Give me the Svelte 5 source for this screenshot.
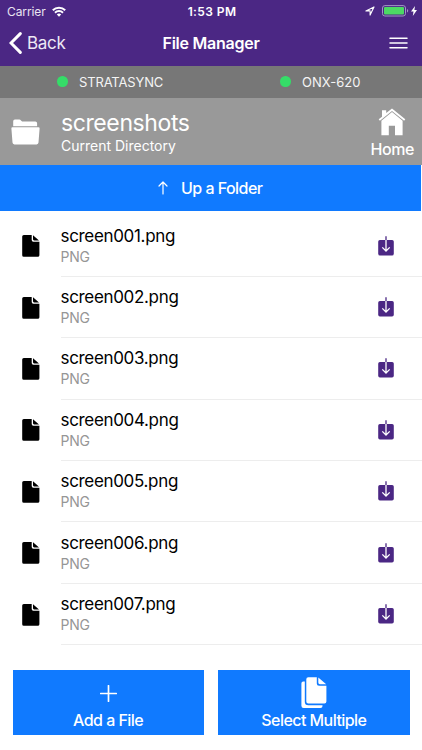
<script>
  let directory = 'screenshots';

  const connections = [
    { name: 'STRATASYNC', online: true },
    { name: 'ONX-620', online: true }
  ];

  const files = [1, 2, 3, 4, 5, 6, 7].map(n => ({
    name: `screen00${n}.png`,
    type: 'PNG'
  }));
</script>

<main class="screen">
  <header class="header">
    <div class="status-bar">
      <div class="carrier">
        <span class="carrier-name">Carrier</span>
        <svg class="wifi" viewBox="0 0 14 11"><g fill="none" stroke="currentColor" stroke-width="2"><path d="M.8 4.2a8.8 8.8 0 0 1 12.4 0"/><path d="M3 6.7a5.7 5.7 0 0 1 8 0"/></g><path d="M7 10.7 4.8 8.5a3.2 3.2 0 0 1 4.4 0z" fill="currentColor"/></svg>
      </div>
      <span class="clock">1:53 PM</span>
      <div class="power">
        <svg class="location" viewBox="0 0 10 10"><path d="M9 .9.9 4.9h4.2v4.2z" fill="none" stroke="currentColor" stroke-width="1.1" stroke-linejoin="round"/></svg>
        <svg class="battery" viewBox="0 0 27 12"><rect x=".5" y=".6" width="23" height="10.4" rx="2.4" fill="none" stroke="#a397c4"/><rect x="2" y="2" width="20" height="7.6" rx="1" fill="#4cd964"/><path d="M25 4v3.6q1.2-.5 1.2-1.8T25 4z" fill="#a397c4"/></svg>
        <svg class="bolt" viewBox="0 0 6 10"><path d="M4 0 0 5.6h2.5L1.8 10 6 4.1H3.4z" fill="currentColor"/></svg>
      </div>
    </div>
    <nav class="nav">
      <button class="back">
        <svg viewBox="0 0 13 22"><path d="M11.3 1.6 2 11l9.3 9.4" fill="none" stroke="currentColor" stroke-width="3" stroke-linecap="round"/></svg>
        <span>Back</span>
      </button>
      <h1>File Manager</h1>
      <button class="menu" aria-label="Menu">
        <svg viewBox="0 0 19 12"><path d="M1 1.2h17M1 6h17M1 10.7h17" fill="none" stroke="currentColor" stroke-width="1.5" stroke-linecap="round"/></svg>
      </button>
    </nav>
  </header>

  <div class="connections">
    {#each connections as connection}
      <div class="connection">
        <span class="dot" class:online={connection.online}></span>
        <span>{connection.name}</span>
      </div>
    {/each}
  </div>

  <section class="directory">
    <svg class="folder" viewBox="0 0 29 26"><path d="M2.2 7.2V2.3Q2.2.6 3.9.6h4.4q1 0 1.7.8l.5.6q.5.5 1.4.5h12.4q1.8 0 1.8 1.7v3zM1.5 8.2h26q1.2 0 1.1 1.2l-1.1 14.2q-.1 1.8-1.9 1.8H3.4q-1.8 0-1.9-1.8L.4 9.4q-.1-1.2 1.1-1.2z" fill="currentColor"/></svg>
    <div class="directory-text">
      <h2>{directory}</h2>
      <p>Current Directory</p>
    </div>
    <button class="home">
      <svg viewBox="0 0 28 28"><path d="M4 8.7V2.2h4.2v2.7L14 .5l13.3 10.8-1.2 1.5L14 3 1.9 12.8.7 11.3z" fill="currentColor"/><path d="M14 4.1 3.4 12.7v14.5h7.4V17.8H17v9.4h7.6V12.7z" fill="currentColor"/></svg>
      <span>Home</span>
    </button>
  </section>

  <button class="up">
    <svg viewBox="0 0 10 14"><path d="M5 13V1.2M1 5l4-4 4 4" fill="none" stroke="currentColor" stroke-width="1.2" stroke-linecap="round" stroke-linejoin="round"/></svg>
    <span>Up a Folder</span>
  </button>

  <ul class="files">
    {#each files as file}
      <li>
        <svg class="file-icon" viewBox="0 0 18 22"><path d="M1.8 0H9.7v5.1q0 1.6 1.6 1.6h6.1v13.5q0 1.6-1.6 1.6H1.8Q.2 21.8.2 20.2V1.6Q.2 0 1.8 0zM11 .3l6 5.1h-4.9q-1.1 0-1.1-1.1z" fill="currentColor"/></svg>
        <div class="file-row">
          <div class="file-text">
            <span class="file-name">{file.name}</span>
            <span class="file-type">{file.type}</span>
          </div>
          <button class="download" aria-label="Download {file.name}">
            <svg viewBox="0 0 16 20"><rect x=".2" y="4" width="15.6" height="15.5" rx="1.7" fill="currentColor"/><path d="M8 .3V4" stroke="currentColor" stroke-width="1.3"/><path d="M8 4v11M4.3 11.4 8 15l3.7-3.6" fill="none" stroke="#fff" stroke-width="1.3"/></svg>
          </button>
        </div>
      </li>
    {/each}
  </ul>

  <footer class="actions">
    <button class="action">
      <svg class="plus" viewBox="0 0 17 17"><path d="M8.5.7v15.6M.7 8.5h15.6" fill="none" stroke="currentColor" stroke-width="1.7" stroke-linecap="round"/></svg>
      <span>Add a File</span>
    </button>
    <button class="action">
      <svg class="copies" viewBox="0 0 26 32"><path d="M2.2 4.6h1.6v20.2q0 3.5 3.5 3.5h14.2v.6q0 2-2 2H2.6q-2.2 0-2.2-2.2V6.4q0-1.8 1.8-1.8z" fill="currentColor"/><path d="M7.3.3h8.5v6.1q0 2.3 2.3 2.3h7.3v15.7q0 2-2 2H7.3q-2 0-2-2V2.3q0-2 2-2zM17.3.5l7.9 6.7h-6.3q-1.6 0-1.6-1.6z" fill="currentColor"/></svg>
      <span>Select Multiple</span>
    </button>
  </footer>
</main>

<style>
  :global(body) { margin: 0; background: #fff; }

  .screen {
    width: 422px;
    height: 750px;
    overflow: hidden;
    background: #fff;
    color: #000;
    font-family: Inter, "Liberation Sans", sans-serif;
    white-space: nowrap;
  }
  button { margin: 0; padding: 0; border: 0; background: none; color: inherit; font: inherit; }
  svg { display: block; flex: none; }
  h1, h2, p, ul { margin: 0; padding: 0; }

  .header { height: 65.5px; background: #4b2784; color: #fff; }
  .status-bar { height: 21px; display: grid; grid-template-columns: 1fr auto 1fr; align-items: center; padding: 1px 5px 0 7px; box-sizing: border-box; }
  .carrier { display: flex; align-items: center; gap: 6px; font-size: 12px; letter-spacing: -0.1px; color: #e9e4f1; }
  .wifi { width: 14px; height: 11px; color: #fff; }
  .clock { font-size: 12px; font-weight: 600; letter-spacing: 0.4px; }
  .power { display: flex; align-items: center; justify-content: flex-end; }
  .location { width: 10px; height: 10px; margin-right: 7px; }
  .battery { width: 27px; height: 12px; margin-right: 2px; }
  .bolt { width: 6px; height: 10px; }

  .nav { height: 44px; display: grid; grid-template-columns: 1fr auto 1fr; align-items: center; padding: 0 14px; }
  .back { display: flex; align-items: center; gap: 5px; margin-left: -5px; font-size: 17px; letter-spacing: -0.3px; color: #eee9f5; }
  .back svg { width: 13px; height: 22px; color: #fff; }
  .nav h1 { font-size: 16px; font-weight: 600; letter-spacing: -0.25px; }
  .menu { justify-self: end; }
  .menu svg { width: 19px; height: 12px; }

  .connections { height: 32.5px; display: flex; background: #777; color: #f4f4f4; font-size: 13px; letter-spacing: -0.15px; }
  .connection { display: flex; align-items: center; gap: 11.5px; }
  .connection:first-child { width: 223px; padding-left: 57px; box-sizing: border-box; }
  .connection:last-child { padding-left: 57px; letter-spacing: 0; }
  .dot { width: 10.5px; height: 10.5px; margin-top: -1px; border-radius: 50%; background: #aaa; }
  .dot.online { background: #35dc68; }

  .directory { height: 67px; display: flex; align-items: center; background: #999; color: #fff; padding: 0 8px 0 11px; }
  .folder { width: 29px; height: 26px; margin-top: 1px; }
  .directory-text { flex: 1; padding-left: 21px; padding-top: 1px; }
  .directory-text h2 { font-size: 23px; font-weight: 400; line-height: 27px; letter-spacing: -0.4px; }
  .directory-text p { font-size: 14px; line-height: 18px; }
  .home { display: flex; flex-direction: column; align-items: center; font-size: 16px; font-weight: 500; line-height: 20px; letter-spacing: -0.4px; padding-top: 4px; }
  .home svg { width: 28px; height: 28px; margin-bottom: 3px; }

  .up { width: 420.5px; height: 45.5px; display: flex; align-items: center; justify-content: center; gap: 13px; background: #107aff; color: #fff; font-size: 16px; font-weight: 500; letter-spacing: -0.55px; }
  .up svg { width: 10px; height: 14px; }

  .files { list-style: none; height: 434.5px; padding-top: 5px; box-sizing: border-box; }
  .files li { display: flex; align-items: center; height: 61.4px; padding-left: 22px; }
  .file-icon { width: 18px; height: 22px; }
  .file-row { flex: 1; height: 100%; display: flex; align-items: center; justify-content: space-between; margin-left: 20.5px; padding-right: 28px; border-bottom: 1px solid #ededed; box-sizing: border-box; }
  .file-text { display: flex; flex-direction: column; padding-top: 1px; }
  .file-name { font-size: 17px; line-height: 21px; letter-spacing: -0.33px; }
  .file-type { font-size: 14px; line-height: 20px; letter-spacing: -0.25px; color: #969696; }
  .download { color: #4b2784; }
  .download svg { width: 16px; height: 20px; }

  .actions { display: flex; gap: 14.5px; margin-top: 25px; padding: 0 12.5px; }
  .action { flex: 1; height: 65px; display: flex; flex-direction: column; align-items: center; justify-content: flex-end; background: #107aff; color: #fff; font-size: 16px; font-weight: 500; line-height: 20px; padding-bottom: 5.5px; box-sizing: border-box; letter-spacing: -0.55px; }
  .plus { width: 17px; height: 17px; margin-bottom: 8px; }
  .copies { width: 26px; height: 32px; margin-bottom: 0.5px; }
</style>
